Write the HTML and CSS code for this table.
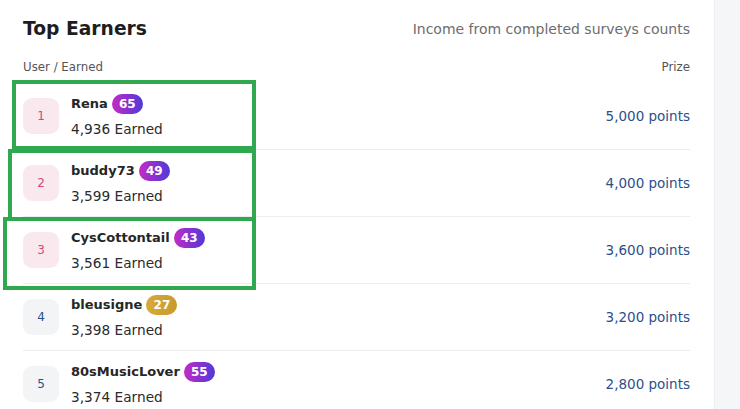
FILE: index.html
```html
<!DOCTYPE html>
<html lang="en">
<head>
<meta charset="utf-8">
<title>Top Earners</title>
<link rel="stylesheet" href="styles.css">
</head>
<body>
<div class="page">
  <section class="panel">
    <header class="head">
      <h1 class="title">Top Earners</h1>
      <p class="subtitle">Income from completed surveys counts</p>
    </header>
    <div class="cols">
      <span>User / Earned</span>
      <span>Prize</span>
    </div>
    <ul class="list">
      <li class="row">
        <div class="rank top">1</div>
        <div class="info">
          <div class="name">Rena <span class="badge purple">65</span></div>
          <div class="earned">4,936 Earned</div>
        </div>
        <div class="prize">5,000 points</div>
      </li>
      <li class="row">
        <div class="rank top">2</div>
        <div class="info">
          <div class="name">buddy73 <span class="badge purple">49</span></div>
          <div class="earned">3,599 Earned</div>
        </div>
        <div class="prize">4,000 points</div>
      </li>
      <li class="row">
        <div class="rank top">3</div>
        <div class="info">
          <div class="name">CysCottontail <span class="badge purple">43</span></div>
          <div class="earned">3,561 Earned</div>
        </div>
        <div class="prize">3,600 points</div>
      </li>
      <li class="row">
        <div class="rank">4</div>
        <div class="info">
          <div class="name">bleusigne <span class="badge gold">27</span></div>
          <div class="earned">3,398 Earned</div>
        </div>
        <div class="prize">3,200 points</div>
      </li>
      <li class="row">
        <div class="rank">5</div>
        <div class="info">
          <div class="name">80sMusicLover <span class="badge purple">55</span></div>
          <div class="earned">3,374 Earned</div>
        </div>
        <div class="prize">2,800 points</div>
      </li>
    </ul>
  </section>
  <aside class="side"></aside>
  <div class="mark mark1"></div>
  <div class="mark mark2"></div>
  <div class="mark mark3"></div>
</div>
</body>
</html>
```
FILE: styles.css
```css
* { box-sizing: border-box; }
html, body { margin: 0; padding: 0; }
body {
  font-family: "DejaVu Sans", "Open Sans", sans-serif;
  background: #f5f6f8;
  color: #222;
}
.page {
  position: relative;
  display: flex;
  width: 740px;
  height: 409px;
  overflow: hidden;
}
.panel {
  width: 715px;
  background: #fff;
  padding: 16px 24px 0 23px;
  border-right: 1px solid #eceef1;
}
.side { flex: 1; background: #f5f6f8; }
.head {
  display: flex;
  justify-content: space-between;
  align-items: center;
  height: 26px;
}
.title {
  margin: 0;
  font-size: 18.7px;
  font-weight: 700;
  color: #1d1d1f;
  line-height: 26px;
}
.subtitle {
  margin: 0;
  font-size: 14px;
  color: #6d6d6d;
  line-height: 26px;
}
.cols {
  display: flex;
  justify-content: space-between;
  margin-top: 17px;
  font-size: 11.8px;
  line-height: 16px;
  color: #555;
}
.list {
  list-style: none;
  margin: 8px 0 0;
  padding: 0;
}
.row {
  display: flex;
  align-items: center;
  height: 67px;
  border-bottom: 1px solid #ededed;
}
.rank {
  width: 36px;
  height: 36px;
  border-radius: 9px;
  background: #f3f4f6;
  color: #2c4f8a;
  display: flex;
  align-items: center;
  justify-content: center;
  font-size: 12px;
  margin-right: 12px;
}
.rank.top { background: #f9e9ee; color: #d44a73; }
.info { flex: 1; }
.name {
  display: flex;
  align-items: center;
  gap: 4px;
  height: 20px;
  font-size: 13px;
  font-weight: 700;
  color: #262626;
}
.badge {
  display: inline-flex;
  align-items: center;
  justify-content: center;
  height: 20px;
  min-width: 31px;
  padding: 0 6px;
  border-radius: 10px;
  color: #fff;
  font-size: 12px;
  font-weight: 700;
}
.badge.purple { background: linear-gradient(90deg, #c42ac6, #4e3ad9); }
.badge.gold { background: linear-gradient(90deg, #d7a93a, #c99a2e); }
.earned {
  margin-top: 5px;
  font-size: 13.7px;
  line-height: 20px;
  color: #2b2b2b;
}
.prize {
  font-size: 13.5px;
  color: #2c4f8a;
}
.mark {
  position: absolute;
  border: 4px solid #2fa84f;
  pointer-events: none;
}
.mark1 { left: 12px; top: 80px; width: 244px; height: 70px; }
.mark2 { left: 8px; top: 149px; width: 248px; height: 72px; }
.mark3 { left: 3px; top: 217px; width: 253px; height: 73px; }
```
